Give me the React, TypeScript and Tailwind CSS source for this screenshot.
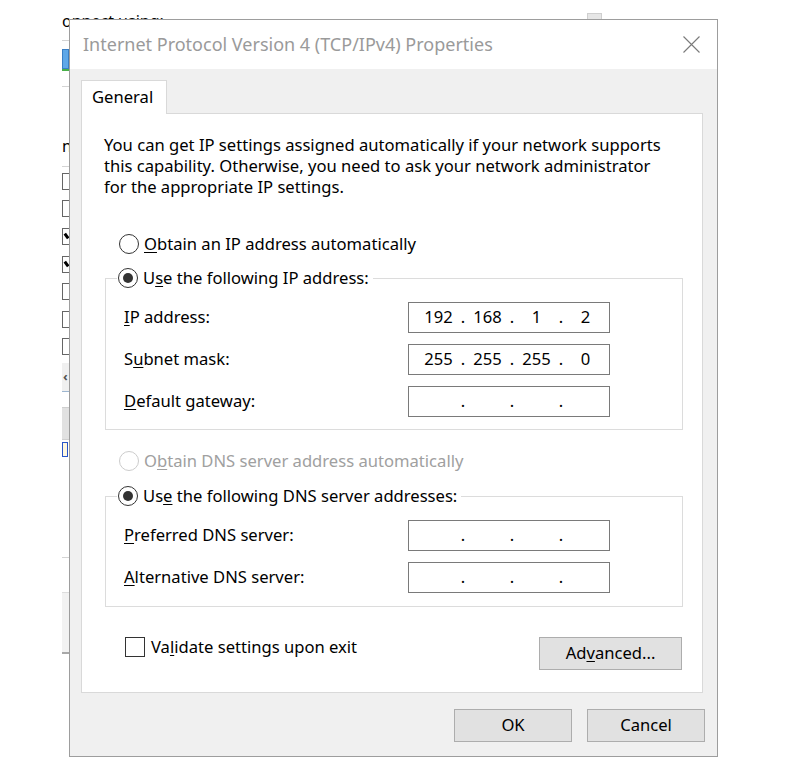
import React from 'react';

const font = { fontFamily: '"Noto Sans", "Open Sans", Arial, sans-serif' };

// Parent "Ethernet Properties" window peeking out on the left
const ParentWindow: React.FC = () => {
  const boxes = [173, 200, 228, 256, 283, 311, 338];
  return (
    <div className="absolute left-[62px] top-0 w-[540px] h-[660px] bg-white text-[16px] text-black">
      <div className="absolute left-0 top-[11px] leading-[20px]">onnect using:</div>
      <div className="absolute left-[525px] top-[13px] w-[15px] h-[8px] bg-[#e6e6e6] border border-[#cfcfcf]" />
      <div className="absolute left-0 top-[40px] w-[200px] h-[47px] border-t border-b border-[#d4d4d4]">
        <div className="absolute left-0 top-[8px] w-[7px] h-[20px] bg-[#5fa8e8] border border-[#3b7fc4]" />
        <div className="absolute left-0 top-[28px] w-[7px] h-[2px] bg-[#48b048]" />
      </div>
      <div className="absolute left-0 top-[136px] leading-[20px]">n</div>
      <div className="absolute left-0 top-[166px] w-[200px] border-t border-[#d4d4d4]" />
      {boxes.map((y, i) => (
        <div
          key={y}
          className="absolute left-0 w-[16px] h-[17px] border border-[#666] bg-white"
          style={{ top: y }}
        >
          {(i === 2 || i === 3) && <div className="absolute left-[2px] top-[4px] w-[3px] h-[6px] bg-black rotate-[-35deg]" />}
        </div>
      ))}
      <div className="absolute left-0 top-[363px] w-[20px] h-[29px] bg-[#f0f0f0] border-b border-[#9db6d0] flex items-center pl-[1px] text-[#555] text-[13px] font-bold">‹</div>
      <div className="absolute left-0 top-[407px] w-[40px] h-[33px] bg-[#e1e1e1] border-t border-b border-[#cfcfcf]" />
      <div className="absolute left-0 top-[442px] w-[6px] h-[15px] border border-[#2a56c8] bg-[#fff8e0]" />
      <div className="absolute left-0 top-[557px] w-[40px] border-t border-[#d4d4d4]" />
      <div className="absolute left-0 top-[592px] w-[40px] h-[62px] bg-[#f2f2f2] border-t border-[#dddddd] border-b-2 border-b-[#a8a8a8]" />
    </div>
  );
};

const Radio: React.FC<{ checked?: boolean; disabled?: boolean }> = ({ checked, disabled }) => (
  <span
    className={`w-[20px] h-[20px] rounded-full border flex items-center justify-center bg-white shrink-0 ${
      disabled ? 'border-[#cccccc]' : 'border-[#333333]'
    }`}
  >
    {checked && <span className="w-[10px] h-[10px] rounded-full bg-[#333333]" />}
  </span>
);

const IpField: React.FC<{ octets?: string[] }> = ({ octets = ['', '', '', ''] }) => (
  <div className="w-[202px] h-[31px] border border-[#7a7a7a] bg-white flex items-center pl-[9px] text-black">
    {octets.map((o, i) => (
      <React.Fragment key={i}>
        <span className="w-[41px] text-center">{o}</span>
        {i < 3 && <span className="w-[8px] text-center">.</span>}
      </React.Fragment>
    ))}
  </div>
);

const FieldRow: React.FC<{ label: React.ReactNode; octets?: string[] }> = ({ label, octets }) => (
  <div className="flex items-center">
    <span className="w-[284px]">{label}</span>
    <IpField octets={octets} />
  </div>
);

const Btn: React.FC<{ children: React.ReactNode; className?: string }> = ({ children, className = '' }) => (
  <button className={`h-[33px] bg-[#e1e1e1] border border-[#adadad] text-black ${className}`}>
    {children}
  </button>
);

export default function App() {
  return (
    <div className="relative w-[787px] h-[778px] bg-white overflow-hidden" style={font}>
      <ParentWindow />

      <div className="absolute left-[69px] top-[19px] w-[649px] h-[738px] border border-[#9d9d9d] bg-[#f0f0f0] flex flex-col text-[16.6px] text-black">
        {/* Title bar */}
        <div className="h-[49px] bg-white flex items-center justify-between pl-[13px] pr-[17px] shrink-0">
          <span className="text-[18px] text-[#9a9a9a]">Internet Protocol Version 4 (TCP/IPv4) Properties</span>
          <svg width="17" height="17" viewBox="0 0 17 17" className="mb-[1px]">
            <path d="M0.5 0.5 L16.5 16.5 M16.5 0.5 L0.5 16.5" stroke="#7a7a7a" strokeWidth="1.1" fill="none" />
          </svg>
        </div>

        <div className="flex flex-col pl-[11px] pt-[11px]">
          {/* Tab */}
          <div className="w-[86px] h-[34px] bg-white border border-b-0 border-[#d9d9d9] -mb-px relative z-10 flex items-center pl-[10px]">
            General
          </div>

          {/* Tab panel */}
          <div className="w-[622px] h-[580px] bg-white border border-[#d9d9d9] flex flex-col pt-[20px]">
            <p className="pl-[22px] leading-[21px]">
              You can get IP settings assigned automatically if your network supports
              <br />
              this capability. Otherwise, you need to ask your network administrator
              <br />
              for the appropriate IP settings.
            </p>

            <div className="flex items-center gap-[5px] h-[24px] mt-[35px] ml-[37px]">
              <Radio />
              <span>
                <u className="underline-offset-2">O</u>btain an IP address automatically
              </span>
            </div>

            <fieldset className="mt-[10px] ml-[23px] w-[578px] border border-[#dcdcdc] px-[18px] pb-[12px]">
              <legend className="ml-[-7px] pl-[1px] pr-[4px] h-[24px] flex items-center gap-[5px]">
                <Radio checked />
                <span>
                  U<u className="underline-offset-2">s</u>e the following IP address:
                </span>
              </legend>
              <div className="flex flex-col gap-[11px] pt-[12px]">
                <FieldRow label={<><u className="underline-offset-2">I</u>P address:</>} octets={['192', '168', '1', '2']} />
                <FieldRow label={<>S<u className="underline-offset-2">u</u>bnet mask:</>} octets={['255', '255', '255', '0']} />
                <FieldRow label={<><u className="underline-offset-2">D</u>efault gateway:</>} />
              </div>
            </fieldset>

            <div className="flex items-center gap-[5px] h-[24px] mt-[19px] ml-[37px] text-[#a0a0a0]">
              <Radio disabled />
              <span>
                O<u className="underline-offset-2">b</u>tain DNS server address automatically
              </span>
            </div>

            <fieldset className="mt-[11px] ml-[23px] w-[578px] border border-[#dcdcdc] px-[18px] pb-[13px]">
              <legend className="ml-[-7px] pl-[1px] pr-[4px] h-[24px] flex items-center gap-[5px]">
                <Radio checked />
                <span>
                  Us<u className="underline-offset-2">e</u> the following DNS server addresses:
                </span>
              </legend>
              <div className="flex flex-col gap-[11px] pt-[12px]">
                <FieldRow label={<><u className="underline-offset-2">P</u>referred DNS server:</>} />
                <FieldRow label={<><u className="underline-offset-2">A</u>lternative DNS server:</>} />
              </div>
            </fieldset>

            <div className="flex justify-between items-start mt-[30px] ml-[43px] mr-[20px]">
              <div className="flex items-center gap-[6px] h-[20px]">
                <span className="w-[20px] h-[20px] border border-[#333333] bg-white" />
                <span>
                  Va<u className="underline-offset-2">l</u>idate settings upon exit
                </span>
              </div>
              <Btn className="w-[143px]">
                Ad<u className="underline-offset-2">v</u>anced...
              </Btn>
            </div>
          </div>
        </div>

        {/* Bottom buttons */}
        <div className="flex justify-end gap-[15px] pr-[12px] mt-[16px]">
          <Btn className="w-[118px]">OK</Btn>
          <Btn className="w-[118px]">Cancel</Btn>
        </div>
      </div>
    </div>
  );
}
